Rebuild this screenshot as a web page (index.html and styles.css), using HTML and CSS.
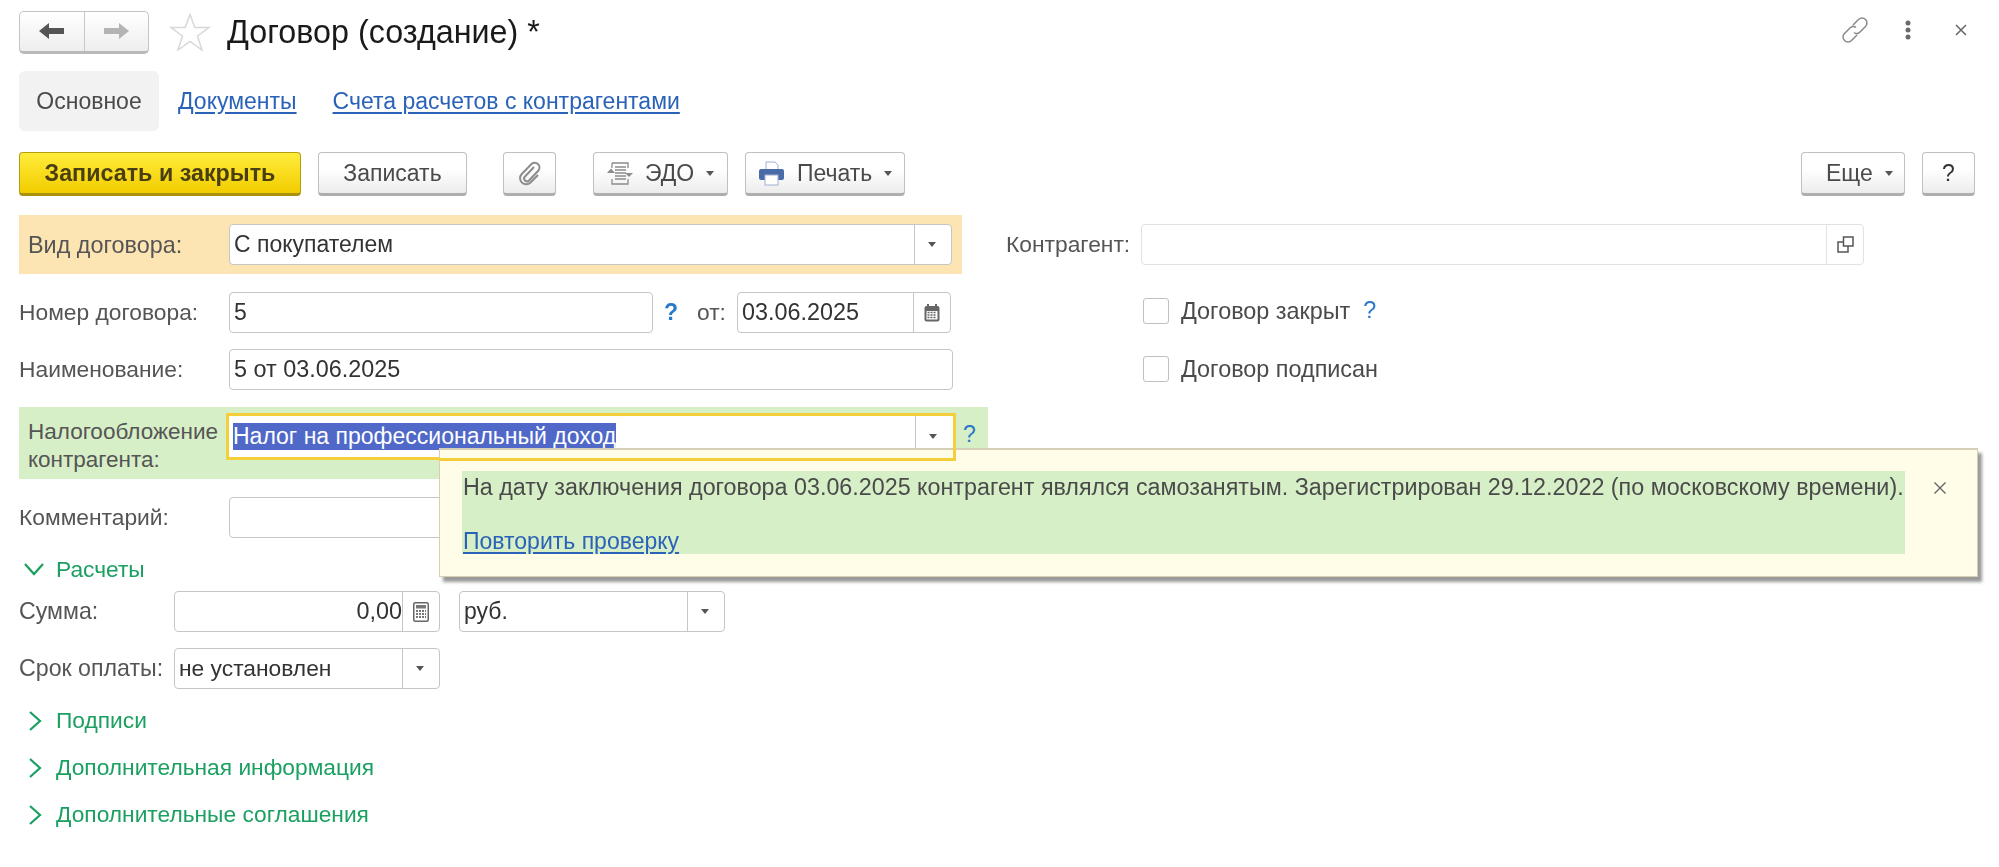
FILE: index.html
```html
<!DOCTYPE html>
<html lang="ru">
<head>
<meta charset="utf-8">
<title>Договор (создание)</title>
<link rel="stylesheet" href="styles.css">
</head>
<body>
<div class="page">
  <header class="head">
    <div class="nav">
      <span class="nav-btn"><svg width="28" height="20" viewBox="0 0 28 20"><path d="M1 10 L11 2 V7 H26 V13 H11 V18 Z" fill="#555"/></svg></span>
      <span class="nav-btn"><svg width="28" height="20" viewBox="0 0 28 20"><path d="M27 10 L17 2 V7 H2 V13 H17 V18 Z" fill="#b4b4b4"/></svg></span>
    </div>
    <svg class="star" width="42" height="38" viewBox="0 0 42 38"><path d="M21 1.500 L25.800 14.500 H40 L28.500 23 L33 37 L21 28.500 L9 37 L13.500 23 L2 14.500 H16.200 Z" fill="none" stroke="#d8d8d8" stroke-width="1.500"/></svg>
    <h1 class="title">Договор (создание) *</h1>
    <div class="win-icons">
      <svg width="28" height="28" viewBox="0 0 28 28" fill="none" stroke="#8a8a8a" stroke-width="1.500"><path d="M12 9 L17.500 3.500 a4.500 4.500 0 0 1 7 7 L19 16 a4.500 4.500 0 0 1 -6 .5"/><path d="M16 19 L10.500 24.500 a4.500 4.500 0 0 1 -7 -7 L9 12 a4.500 4.500 0 0 1 6 -.5"/></svg>
      <svg class="dots" width="6" height="20" viewBox="0 0 6 20" fill="#6a6a6a"><circle cx="3" cy="3" r="2.500"/><circle cx="3" cy="10" r="2.500"/><circle cx="3" cy="17" r="2.500"/></svg>
      <svg width="12" height="12" viewBox="0 0 12 12" stroke="#666" stroke-width="1.500"><path d="M1 1 L11 11 M11 1 L1 11"/></svg>
    </div>
  </header>

  <nav class="tabs">
    <span class="tab-current">Основное</span>
    <a class="link tab-docs">Документы</a>
    <a class="link">Счета расчетов с контрагентами</a>
  </nav>

  <div class="toolbar">
    <button class="btn btn-primary">Записать и закрыть</button>
    <button class="btn btn-save">Записать</button>
    <button class="btn btn-clip"><svg width="24" height="25" viewBox="0 0 24 25" fill="none" stroke="#8c8c8c" stroke-width="2"><path d="M16 6 L7 15.500 a2.800 2.800 0 0 0 4 4 L20.500 9.500 a4.800 4.800 0 0 0 -7 -6.500 L3.800 13 a6 6 0 0 0 8.700 8.500 L20 14"/></svg></button>
    <button class="btn btn-edo"><svg width="28" height="25" viewBox="0 0 28 25" fill="none" stroke="#8c8c8c" stroke-width="1.300"><path d="M6 2 H22 V7 M22 18 V23 H6 V18 M6 7 V2"/><path d="M9 6 H20 M9 9 H20 M9 12 H20 M9 15 H20 M9 18 H20"/><path d="M1 12 L5 7.500 L9 12 Z M19 12 L23 16 L27 12 Z" fill="#8c8c8c" stroke="none"/></svg><span>ЭДО</span><i class="caret"></i></button>
    <button class="btn btn-print"><svg width="27" height="25" viewBox="0 0 27 25"><path d="M8 1 H17 L20 4 V9 H8 Z" fill="#fff" stroke="#9fb0d0"/><rect x="1" y="8" width="25" height="11" rx="2" fill="#4a6ba8"/><rect x="7" y="14" width="13" height="10" fill="#fff" stroke="#9fb0d0"/></svg><span>Печать</span><i class="caret"></i></button>
    <button class="btn btn-more"><span>Еще</span><i class="caret"></i></button>
    <button class="btn btn-help">?</button>
  </div>

  <div class="form">
    <div class="col-left">
      <div class="band band-orange">
        <label class="lbl lbl-band">Вид договора:</label>
        <div class="field f-kind"><span class="val">С покупателем</span><span class="drop"><i class="tri"></i></span></div>
      </div>
      <div class="row row-number">
        <label class="lbl lbl-main">Номер договора:</label>
        <div class="field f-number"><span class="val">5</span></div>
        <span class="hint hint-number">?</span>
        <label class="lbl lbl-from">от:</label>
        <div class="field f-date"><span class="val">03.06.2025</span><span class="drop"><svg width="16" height="18" viewBox="0 0 16 18"><rect x="0.500" y="2" width="15" height="15.500" rx="2" fill="#666"/><rect x="3" y="0" width="2" height="4" fill="#666"/><rect x="11" y="0" width="2" height="4" fill="#666"/><path d="M2.500 7 H13.500 V15.500 H2.500 Z" fill="#fff"/><path d="M3.500 8.500 H12.500 M3.500 11 H12.500 M3.500 13.500 H12.500" stroke="#666" stroke-width="1.500" stroke-dasharray="2 1"/></svg></span></div>
      </div>
      <div class="row row-name">
        <label class="lbl lbl-main">Наименование:</label>
        <div class="field f-name"><span class="val">5 от 03.06.2025</span></div>
      </div>
      <div class="band band-green">
        <label class="lbl lbl-tax">Налогообложение контрагента:</label>
        <div class="field f-tax"><span class="val"><span class="selected">Налог на профессиональный доход</span></span><span class="drop"><i class="tri"></i></span></div>
        <span class="hint hint-tax">?</span>
      </div>
      <div class="row row-comment">
        <label class="lbl lbl-main">Комментарий:</label>
        <div class="field f-comment"></div>
      </div>
      <div class="group group-open"><svg width="22" height="14" viewBox="0 0 22 14" fill="none" stroke="#1ba061" stroke-width="2.200"><path d="M2 2 L11 12 L20 2"/></svg><span>Расчеты</span></div>
      <div class="row row-sum">
        <label class="lbl lbl-sum">Сумма:</label>
        <div class="field f-amount"><span class="val val-right">0,00</span><span class="drop"><svg width="16" height="20" viewBox="0 0 16 20"><rect x="0.750" y="0.750" width="14.500" height="18.500" rx="1.500" fill="none" stroke="#666" stroke-width="1.500"/><rect x="3" y="3" width="10" height="3.500" fill="#777"/><path d="M3 9 H13 M3 12 H13 M3 15 H13" stroke="#777" stroke-width="1.800" stroke-dasharray="2 1"/></svg></span></div>
        <div class="field f-currency"><span class="val">руб.</span><span class="drop"><i class="tri"></i></span></div>
      </div>
      <div class="row row-term">
        <label class="lbl lbl-sum">Срок оплаты:</label>
        <div class="field f-term"><span class="val">не установлен</span><span class="drop"><i class="tri"></i></span></div>
      </div>
      <div class="group group-closed"><svg width="14" height="22" viewBox="0 0 14 22" fill="none" stroke="#1ba061" stroke-width="2.200"><path d="M2 2 L12 11 L2 20"/></svg><span>Подписи</span></div>
      <div class="group group-closed"><svg width="14" height="22" viewBox="0 0 14 22" fill="none" stroke="#1ba061" stroke-width="2.200"><path d="M2 2 L12 11 L2 20"/></svg><span>Дополнительная информация</span></div>
      <div class="group group-closed"><svg width="14" height="22" viewBox="0 0 14 22" fill="none" stroke="#1ba061" stroke-width="2.200"><path d="M2 2 L12 11 L2 20"/></svg><span>Дополнительные соглашения</span></div>
    </div>
    <div class="col-right">
      <div class="row row-partner">
        <label class="lbl lbl-partner">Контрагент:</label>
        <div class="field f-partner"><span class="val"></span><span class="drop"><svg width="17" height="17" viewBox="0 0 17 17" fill="none" stroke="#555" stroke-width="1.500"><rect x="6.500" y="1" width="9.500" height="9" /><path d="M6.500 6 H1 V16 H11 V10"/></svg></span></div>
      </div>
      <div class="check check-closed"><i class="box"></i><span>Договор закрыт</span><span class="hint hint-check">?</span></div>
      <div class="check check-signed"><i class="box"></i><span>Договор подписан</span></div>
    </div>
  </div>

  <aside class="popup">
    <div class="popup-body">
      <p class="popup-text">На дату заключения договора 03.06.2025 контрагент являлся самозанятым. Зарегистрирован 29.12.2022 (по московскому времени).</p>
      <a class="link">Повторить проверку</a>
    </div>
    <svg class="popup-close" width="14" height="14" viewBox="0 0 14 14" stroke="#666" stroke-width="1.400"><path d="M1.500 1.500 L12.500 12.500 M12.500 1.500 L1.500 12.500"/></svg>
  </aside>
  <div class="focus-over"></div>
</div>
</body>
</html>
```

FILE: styles.css
```css
* { box-sizing: border-box; }
html, body { margin: 0; background: #fff; }
body { font-family: "Liberation Sans", Arial, sans-serif; font-size: 23px; color: #4a4a4a; overflow: hidden; }
.page { position: relative; width: 1999px; height: 867px; padding: 0 24px 0 19px; filter: blur(0.4px); }

.head { display: flex; align-items: center; height: 64px; }
.nav { display: flex; width: 130px; height: 43px; border: 1px solid #c4c4c4; border-bottom: 3px solid #b9b9b9; border-radius: 5px; background: linear-gradient(#fff, #eee); }
.nav-btn { flex: 1; display: flex; align-items: center; justify-content: center; }
.nav-btn + .nav-btn { border-left: 1px solid #c8c8c8; }
.star { margin-left: 20px; }
.title { margin: 0 0 0 16px; font-size: 32.300px; font-weight: 400; color: #1a1a1a; white-space: nowrap; }
.win-icons { display: flex; align-items: center; margin: 0 8px 5px auto; gap: 36px; }
.dots { margin-right: 8px; }

.tabs { display: flex; align-items: center; height: 60px; margin-top: 7px; }
.tab-current { display: flex; align-items: center; height: 60px; width: 140px; justify-content: center; border-radius: 6px; background: #f2f2f2; color: #4a4a4a; }
.link { color: #2a62b8; text-decoration: underline; text-underline-offset: 3px; white-space: nowrap; }
.tab-docs { margin: 0 36px 0 19px; }

.toolbar { display: flex; height: 44px; margin-top: 21px; }
.btn { display: flex; align-items: center; justify-content: center; height: 44px; padding: 0; border: 1px solid #c0c0c0; border-bottom: 3px solid #aeaeae; border-radius: 4px; background: linear-gradient(#fff 40%, #ececec); font: inherit; color: #4a4a4a; white-space: nowrap; }
.btn-primary { width: 282px; border-color: #b59d10; border-bottom-color: #a8920f; background: linear-gradient(#ffec3c, #f2cd00); font-weight: 700; font-size: 23.300px; color: #4a3f10; }
.btn-save { width: 149px; margin-left: 17px; }
.btn-clip { width: 53px; margin-left: 36px; }
.btn-edo { width: 135px; margin-left: 37px; justify-content: flex-start; padding-left: 12px; }
.btn-edo span { margin: 0 12px 0 11px; }
.btn-print { width: 160px; margin-left: 17px; justify-content: flex-start; padding-left: 12px; }
.btn-print span { margin: 0 12px 0 12px; }
.btn-more { width: 104px; margin-left: auto; justify-content: flex-start; padding-left: 24px; }
.btn-more span { margin-right: 12px; }
.btn-help { width: 53px; margin-left: 17px; color: #333; }
.caret { width: 0; height: 0; border: 4px solid transparent; border-top: 5px solid #555; border-bottom: 0; }

.form { display: flex; margin-top: 19px; }
.col-left { width: 987px; flex: none; }
.col-right { padding-top: 9px; }

.band { display: flex; width: 943px; }
.band-orange { height: 59px; padding: 9px 0 0 9px; background: #fde4b3; }
.band-green { position: relative; width: 969px; height: 72px; margin-top: 17px; padding: 6px 0 0 9px; background: #d7efc7; }

.row { display: flex; align-items: center; }
.row-number { margin-top: 18px; }
.row-name { margin-top: 16px; }
.row-comment { margin-top: 18px; }
.row-term { margin-top: 16px; }

.lbl { display: block; color: #555; white-space: nowrap; font-size: 22.800px; }
.lbl-band { width: 201px; padding-top: 8px; font-size: 23.400px; }
.lbl-main { width: 210px; }
.lbl-from { margin-left: 13px; width: 40px; }
.lbl-sum { width: 155px; font-size: 23.200px; }
.lbl-tax { width: 198px; white-space: normal; font-size: 22.500px; line-height: 28px; padding-top: 5px; }
.lbl-partner { width: 135px; }

.field { display: flex; align-items: stretch; height: 41px; border: 1px solid #c6c6c6; border-radius: 4px; background: #fff; color: #333; font-size: 23px; }
.val { flex: 1; min-width: 0; padding: 0 4px; line-height: 39px; white-space: nowrap; overflow: hidden; }
.val-right { text-align: right; padding-right: 0; }
.drop { flex: none; display: flex; align-items: center; justify-content: center; width: 37px; border-left: 1px solid #c6c6c6; }
.tri { width: 0; height: 0; margin-right: 3px; border: 4px solid transparent; border-top: 5px solid #555; border-bottom: 0; }

.f-kind { width: 723px; }
.f-number { width: 424px; }
.f-date { width: 214px; font-size: 23.400px; }
.f-name { width: 724px; font-size: 23.400px; }
.f-tax { width: 730px; height: 47px; border: 3px solid #f5cf3a; border-radius: 1px; }
.f-tax .val { line-height: 41px; padding-left: 4px; }
.f-tax .drop { width: 38px; }
.selected { display: inline-block; line-height: 27px; background: #5068c8; color: #fff; }
.f-comment { width: 724px; }
.f-amount { width: 266px; font-size: 23.400px; }
.f-currency { width: 266px; margin-left: 19px; }
.f-term { width: 266px; font-size: 22.800px; }
.f-partner { width: 723px; border-color: #e2e2e2; }
.f-partner .drop { border-left-color: #e2e2e2; }

.hint { color: #2a78c8; font-weight: 400; }
.hint-number { width: 20px; margin-left: 11px; font-weight: 700; }
.hint-tax { margin: 8px 0 0 7px; }
.hint-check { margin: -2px 0 0 13px; }

.group { display: flex; align-items: center; color: #1ba061; font-size: 22.750px; white-space: nowrap; }
.group-open { height: 32px; margin-top: 15px; padding-left: 4px; }
.group-open span { margin-left: 11px; }
.group-closed { height: 47px; padding-left: 9px; }
.group-closed span { margin-left: 14px; }
.group-open + .row { margin-top: 6px; }
.row-term + .group-closed { margin-top: 8px; }

.check { display: flex; align-items: center; height: 26px; color: #4a4a4a; font-size: 23.400px; white-space: nowrap; }
.check-closed { margin: 33px 0 0 137px; }
.check-signed { margin: 32px 0 0 137px; }
.box { width: 26px; height: 26px; margin-right: 12px; border: 1px solid #c0c0c0; border-radius: 3px; background: #fff; }

.popup { position: absolute; left: 439px; top: 448px; display: flex; width: 1539px; height: 129px; padding: 21px 0 0 22px; background: #fffde8; border: 1px solid #d6cfb6; border-top-width: 2px; box-shadow: 4px 5px 3px #9a9a9a; }
.popup-body { flex: none; width: 1443px; height: 83px; padding-left: 1px; background: #d7efc7; }
.popup-text { margin: 3px 0 28px; font-size: 23.300px; line-height: 26px; color: #4a4a4a; white-space: nowrap; }
.popup-close { margin: 10px 0 0 28px; }
.focus-over { position: absolute; left: 439px; top: 448px; width: 517px; height: 13px; border-right: 3px solid #f5cf3a; border-bottom: 3px solid #f5cf3a; }
```
